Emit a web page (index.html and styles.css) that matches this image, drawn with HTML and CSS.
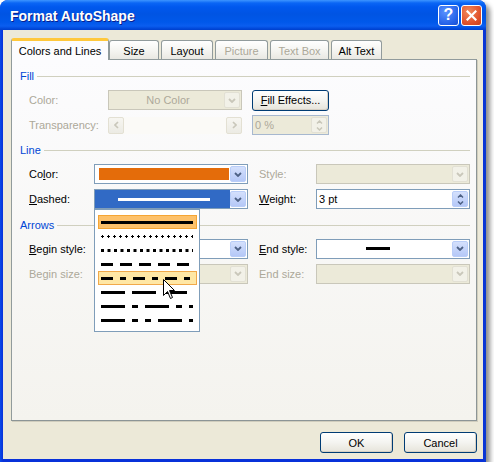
FILE: index.html
```html
<!DOCTYPE html>
<html lang="en">
<head>
    <meta charset="UTF-8">
    <title>Format AutoShape</title>
    <link rel="stylesheet" href="styles.css">
</head>
<body>
    <div class="window">
        <div class="titlebar">
            <span class="title">Format AutoShape</span>
            <div class="caption-buttons">
                <div class="cap-btn help">?</div>
                <div class="cap-btn close">
                    <svg width="11" height="11" viewBox="0 0 11 11"><path d="M1.5 1.5 L9.5 9.5 M9.5 1.5 L1.5 9.5" stroke="#fff" stroke-width="2.2" stroke-linecap="square"/></svg>
                </div>
            </div>
        </div>

        <div class="client">
            <div class="tabs">
                <div class="tab active">Colors and Lines</div>
                <div class="tab tab-size">Size</div>
                <div class="tab tab-layout">Layout</div>
                <div class="tab tab-picture disabled">Picture</div>
                <div class="tab tab-textbox disabled">Text Box</div>
                <div class="tab tab-alt">Alt Text</div>
            </div>

            <div class="panel">
                <!-- Fill -->
                <div class="group-head head-fill">Fill</div>
                <div class="row row-fill-color">
                    <span class="lbl lbl-fill disabled">Color:</span>
                    <div class="combo combo-fill disabled">
                        <span class="combo-value centered">No Color</span>
                        <span class="combo-btn"><svg width="8" height="5" viewBox="0 0 8 5"><path d="M1 1 L4 4 L7 1" fill="none" stroke="currentColor" stroke-width="1.8"/></svg></span>
                    </div>
                    <button class="btn btn-effects"><u>F</u>ill Effects...</button>
                </div>
                <div class="row row-transp">
                    <span class="lbl lbl-fill disabled">Transparency:</span>
                    <div class="slider">
                        <span class="slider-btn"><svg width="5" height="8" viewBox="0 0 5 8"><path d="M4 1 L1 4 L4 7" fill="none" stroke="currentColor" stroke-width="1.6"/></svg></span>
                        <span class="slider-track"></span>
                        <span class="slider-btn"><svg width="5" height="8" viewBox="0 0 5 8"><path d="M1 1 L4 4 L1 7" fill="none" stroke="currentColor" stroke-width="1.6"/></svg></span>
                    </div>
                    <div class="spin-field pct disabled">
                        <span class="field-value">0 %</span>
                        <span class="spin-btn">
                            <svg width="7" height="4" viewBox="0 0 7 4"><path d="M1 3.5 L3.5 1 L6 3.5" fill="none" stroke="currentColor" stroke-width="1.5"/></svg>
                            <svg width="7" height="4" viewBox="0 0 7 4"><path d="M1 0.5 L3.5 3 L6 0.5" fill="none" stroke="currentColor" stroke-width="1.5"/></svg>
                        </span>
                    </div>
                </div>

                <!-- Line -->
                <div class="group-head head-line">Line</div>
                <div class="row row-line-color">
                    <span class="lbl">Co<u>l</u>or:</span>
                    <div class="combo combo-wide">
                        <span class="combo-value"><span class="swatch"></span></span>
                        <span class="combo-btn"><svg width="8" height="5" viewBox="0 0 8 5"><path d="M1 1 L4 4 L7 1" fill="none" stroke="currentColor" stroke-width="1.8"/></svg></span>
                    </div>
                    <span class="lbl lbl-right disabled">Style:</span>
                    <div class="combo combo-wide disabled">
                        <span class="combo-value"></span>
                        <span class="combo-btn"><svg width="8" height="5" viewBox="0 0 8 5"><path d="M1 1 L4 4 L7 1" fill="none" stroke="currentColor" stroke-width="1.8"/></svg></span>
                    </div>
                </div>
                <div class="row row-dashed">
                    <span class="lbl"><u>D</u>ashed:</span>
                    <div class="combo combo-wide selected dash-combo">
                        <span class="combo-value"><span class="sel-line"></span></span>
                        <span class="combo-btn"><svg width="8" height="5" viewBox="0 0 8 5"><path d="M1 1 L4 4 L7 1" fill="none" stroke="currentColor" stroke-width="1.8"/></svg></span>

                        <div class="dash-list">
                            <div class="dash-item current"><svg width="92" height="3"><line x1="0" y1="1.5" x2="92" y2="1.5" stroke="#000" stroke-width="3"/></svg></div>
                            <div class="dash-item"><svg width="92" height="3"><line x1="0" y1="1.5" x2="92" y2="1.5" stroke="#000" stroke-width="1" stroke-dasharray="3 3"/><line x1="1" y1="1.5" x2="92" y2="1.5" stroke="#000" stroke-width="3" stroke-dasharray="1 5"/></svg></div>
                            <div class="dash-item"><svg width="92" height="3"><line x1="0" y1="1.5" x2="92" y2="1.5" stroke="#000" stroke-width="3" stroke-dasharray="3 3.5"/></svg></div>
                            <div class="dash-item"><svg width="92" height="3"><line x1="0" y1="1.5" x2="92" y2="1.5" stroke="#000" stroke-width="3" stroke-dasharray="12 7"/></svg></div>
                            <div class="dash-item hover"><svg width="92" height="3"><line x1="0" y1="1.5" x2="92" y2="1.5" stroke="#000" stroke-width="3" stroke-dasharray="12 7 6 7"/></svg></div>
                            <div class="dash-item"><svg width="92" height="3"><line x1="0" y1="1.5" x2="92" y2="1.5" stroke="#000" stroke-width="3" stroke-dasharray="24 7"/></svg></div>
                            <div class="dash-item"><svg width="92" height="3"><line x1="0" y1="1.5" x2="92" y2="1.5" stroke="#000" stroke-width="3" stroke-dasharray="24 7 6 7"/></svg></div>
                            <div class="dash-item"><svg width="92" height="3"><line x1="0" y1="1.5" x2="92" y2="1.5" stroke="#000" stroke-width="3" stroke-dasharray="24 7 6 7 6 7"/></svg></div>

                            <svg class="cursor" width="13" height="21" viewBox="0 0 13 21"><path d="M0.5 0.5 L0.5 16.5 L4.5 12.5 L7.5 19.5 L9.5 18.5 L6.5 11.5 L11.5 11.5 Z" fill="#fff" stroke="#000" stroke-width="1"/></svg>
                        </div>
                    </div>
                    <span class="lbl lbl-right"><u>W</u>eight:</span>
                    <div class="spin-field weight">
                        <span class="field-value">3 pt</span>
                        <span class="spin-btn">
                            <svg width="7" height="4" viewBox="0 0 7 4"><path d="M1 3.5 L3.5 1 L6 3.5" fill="none" stroke="currentColor" stroke-width="1.5"/></svg>
                            <svg width="7" height="4" viewBox="0 0 7 4"><path d="M1 0.5 L3.5 3 L6 0.5" fill="none" stroke="currentColor" stroke-width="1.5"/></svg>
                        </span>
                    </div>
                </div>

                <!-- Arrows -->
                <div class="group-head head-arrows">Arrows</div>
                <div class="row row-begin-style">
                    <span class="lbl"><u>B</u>egin style:</span>
                    <div class="combo combo-wide">
                        <span class="combo-value"></span>
                        <span class="combo-btn"><svg width="8" height="5" viewBox="0 0 8 5"><path d="M1 1 L4 4 L7 1" fill="none" stroke="currentColor" stroke-width="1.8"/></svg></span>
                    </div>
                    <span class="lbl lbl-right"><u>E</u>nd style:</span>
                    <div class="combo combo-wide">
                        <span class="combo-value centered"><span class="arrow-line"></span></span>
                        <span class="combo-btn"><svg width="8" height="5" viewBox="0 0 8 5"><path d="M1 1 L4 4 L7 1" fill="none" stroke="currentColor" stroke-width="1.8"/></svg></span>
                    </div>
                </div>
                <div class="row row-begin-size">
                    <span class="lbl disabled">Begin size:</span>
                    <div class="combo combo-wide disabled">
                        <span class="combo-value"></span>
                        <span class="combo-btn"><svg width="8" height="5" viewBox="0 0 8 5"><path d="M1 1 L4 4 L7 1" fill="none" stroke="currentColor" stroke-width="1.8"/></svg></span>
                    </div>
                    <span class="lbl lbl-right disabled">End size:</span>
                    <div class="combo combo-wide disabled">
                        <span class="combo-value"></span>
                        <span class="combo-btn"><svg width="8" height="5" viewBox="0 0 8 5"><path d="M1 1 L4 4 L7 1" fill="none" stroke="currentColor" stroke-width="1.8"/></svg></span>
                    </div>
                </div>
            </div>

            <div class="dialog-buttons">
                <button class="btn btn-dialog">OK</button>
                <button class="btn btn-dialog">Cancel</button>
            </div>
        </div>
    </div>
</body>
</html>
```

FILE: styles.css
```css
* {
    margin: 0;
    padding: 0;
    box-sizing: border-box;
}

body {
    background: #fff;
    font-family: 'Liberation Sans', Arial, sans-serif;
    font-size: 11px;
    color: #000;
}

u {
    text-decoration: underline;
    text-underline-offset: 1px;
}

.window {
    width: 486px;
    height: 462px;
    display: flex;
    flex-direction: column;
    background: linear-gradient(to right, #0a4ae8, #0831d9 3px, #0831d9 calc(100% - 3px), #0a3ad0);
    border-radius: 8px 8px 0 0;
    box-shadow: 4px 4px 5px rgba(0, 0, 0, 0.45);
}

.titlebar {
    height: 30px;
    flex: none;
    display: flex;
    align-items: center;
    padding: 0 4px 0 10px;
    border-radius: 8px 8px 0 0;
    background: linear-gradient(to bottom,
        #3d95ff 0,
        #0a66f5 3px,
        #0058ee 7px,
        #0054e3 14px,
        #0058ea 22px,
        #0a5ef0 26px,
        #0045d6 29px,
        #0040cc 30px);
}

.title {
    color: #fff;
    font-weight: bold;
    font-size: 14px;
    text-shadow: 1px 1px 0 #0a1e8c;
    padding-top: 1px;
}

.caption-buttons {
    margin-left: auto;
    display: flex;
    gap: 2px;
}

.cap-btn {
    width: 21px;
    height: 21px;
    border: 1px solid #fff;
    border-radius: 3px;
    display: flex;
    align-items: center;
    justify-content: center;
    color: #fff;
}

.help {
    background: radial-gradient(circle at 35% 30%, #5b93ff, #2461e8 70%, #1a4fd0);
    font-weight: bold;
    font-size: 16px;
}

.close {
    background: radial-gradient(circle at 35% 30%, #f08a5c, #e0502a 65%, #c8401c);
}

.client {
    flex: 1;
    margin: 0 3px 3px;
    background: #ece9d8;
    padding: 8px 0 6px 8px;
    display: flex;
    flex-direction: column;
}

/* tabs */
.tabs {
    display: flex;
    align-items: flex-end;
    height: 21px;
    position: relative;
    z-index: 1;
}

.tab {
    height: 19px;
    margin-right: 2px;
    border: 1px solid #919b9c;
    border-bottom: none;
    border-radius: 3px 3px 0 0;
    background: linear-gradient(to bottom, #fff, #f3f3ef 60%, #e9e8e2);
    display: flex;
    align-items: center;
    justify-content: center;
    padding-top: 1px;
}

.tab.disabled {
    color: #aca899;
}

.tab.active {
    width: 98px;
    height: 22px;
    margin-right: 0;
    margin-bottom: -1px;
    background: #fcfcfe;
    border-top: 3px solid #ffc83c;
    border-radius: 3px 3px 0 0;
    padding-top: 0;
}

.tab-size { width: 50px; }
.tab-layout { width: 52px; }
.tab-picture { width: 53px; }
.tab-textbox { width: 59px; }
.tab-alt { width: 51px; }

.panel {
    width: 466px;
    height: 362px;
    border: 1px solid #919b9c;
    border-right-color: #8c9596;
    border-bottom-color: #8c9596;
    background: linear-gradient(to bottom, #fcfcfe, #f4f3ee);
    padding: 9px 6px 0 8px;
    box-shadow: 1px 1px 0 #d0cdbd;
}

.group-head {
    height: 14px;
    display: flex;
    align-items: center;
    gap: 3px;
    color: #0046d5;
}

.group-head::after {
    content: '';
    flex: 1;
    height: 1px;
    background: #d0d0bf;
}

.head-line { margin-top: 8px; }
.head-arrows { margin-top: 9px; }

.row {
    display: flex;
    align-items: center;
    padding-left: 9px;
}

.row-fill-color { height: 22px; margin-top: 6px; }
.row-transp { height: 20px; margin-top: 4px; }
.row-line-color { height: 20px; margin-top: 7px; }
.row-dashed { height: 20px; margin-top: 5px; position: relative; z-index: 2; }
.row-begin-style { height: 21px; margin-top: 6px; }
.row-begin-size { height: 21px; margin-top: 4px; }

.lbl {
    width: 65px;
    flex: none;
    white-space: nowrap;
}

.lbl-fill { width: 79px; }

.lbl-right {
    width: 57px;
    margin-left: 11px;
}

.disabled,
.lbl.disabled {
    color: #aca899;
}

/* combo boxes */
.combo {
    height: 20px;
    display: flex;
    border: 1px solid #7f9db9;
    background: #fff;
    padding: 1px;
    position: relative;
}

.combo-fill { width: 134px; }
.combo-wide { width: 154px; }

.combo-value {
    flex: 1;
    display: flex;
    align-items: center;
    padding-left: 2px;
}

.combo-value.centered {
    justify-content: center;
}

.combo-btn {
    width: 16px;
    flex: none;
    display: flex;
    align-items: center;
    justify-content: center;
    border: 1px solid #b9cdf8;
    border-radius: 2px;
    background: linear-gradient(to bottom, #d4e0fc, #b5c8f7);
    color: #4d6185;
}

.combo.disabled {
    background: #ecead9;
    border-color: #c9c7ba;
}

.combo.disabled .combo-btn {
    background: #f2f1e8;
    border-color: #e2e0d4;
    color: #c9c7ba;
}

.combo.disabled .combo-value {
    color: #aca899;
}

.swatch {
    display: block;
    width: 130px;
    height: 12px;
    margin-left: 1px;
    background: #e46c0a;
}

.combo.selected .combo-value {
    background: #316ac5;
    margin: -1px 0 -1px -1px;
}

.sel-line {
    display: block;
    width: 92px;
    height: 3px;
    margin-left: 21px;
    background: #fff;
}

.arrow-line {
    display: block;
    width: 24px;
    height: 3px;
    background: #000;
    margin-left: -16px;
}

/* dropdown list */
.dash-list {
    position: absolute;
    left: -1px;
    top: 19px;
    width: 106px;
    height: 123px;
    border: 1px solid #7f9db9;
    background: #fff;
    padding: 5px 2px 0 3px;
}

.dash-item {
    height: 14px;
    display: flex;
    align-items: center;
    padding-left: 2px;
    border: 1px solid transparent;
}

.dash-item.current {
    background: #fdc16a;
    border-color: #f5a534;
}

.dash-item.hover {
    background: #ffe7a5;
    border-color: #f1a94a;
}

.cursor {
    position: absolute;
    left: 68px;
    top: 69px;
}

/* slider */
.slider {
    width: 134px;
    height: 17px;
    flex: none;
    display: flex;
    background: #fbfaf7;
}

.slider-btn {
    width: 16px;
    height: 17px;
    display: flex;
    align-items: center;
    justify-content: center;
    border: 1px solid #e3e0d3;
    border-radius: 2px;
    background: linear-gradient(to bottom, #f7f6f1, #ecebe4);
    color: #c9c7ba;
}

.slider-track {
    flex: 1;
}

/* spin fields */
.spin-field {
    height: 20px;
    display: flex;
    border: 1px solid #7f9db9;
    background: #fff;
    padding: 1px;
}

.spin-field.pct {
    width: 77px;
    margin-left: 10px;
    background: #ecead9;
    border-color: #a7b8cf;
}

.spin-field.weight {
    width: 154px;
}

.field-value {
    flex: 1;
    display: flex;
    align-items: center;
    padding-left: 1px;
}

.spin-btn {
    width: 16px;
    display: flex;
    flex-direction: column;
    align-items: center;
    justify-content: center;
    gap: 3px;
    border: 1px solid #b9cdf8;
    border-radius: 2px;
    background: linear-gradient(to bottom, #d4e0fc, #b5c8f7);
    color: #4d6185;
}

.spin-field.disabled .spin-btn {
    background: #f2f1e8;
    border-color: #e2e0d4;
    color: #c9c7ba;
}

/* buttons */
.btn {
    font-family: inherit;
    font-size: 11px;
    color: #000;
    height: 21px;
    border: 1px solid #003c74;
    border-radius: 3px;
    background: linear-gradient(to bottom, #fff, #f4f4f0 50%, #e6e4da);
    box-shadow: inset -1px -1px 0 #d6d0c5;
}

.btn-effects {
    width: 77px;
    margin-left: 10px;
}

.dialog-buttons {
    margin-top: 11px;
    display: flex;
    gap: 11px;
    padding-left: 309px;
}

.btn-dialog {
    width: 73px;
}
```
